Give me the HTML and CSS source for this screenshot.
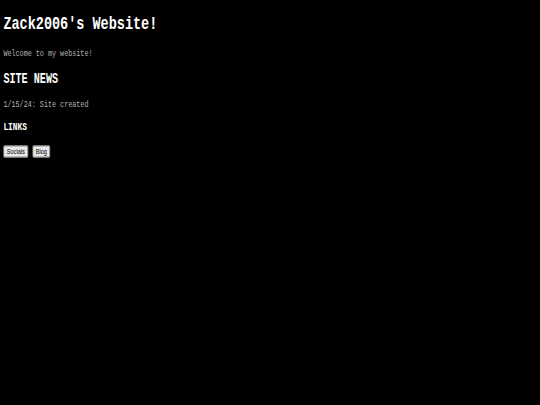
FILE: index.html
```html
<!DOCTYPE html>
<html>
<head>
<meta charset="utf-8">
<title>Zack2006's Website!</title>
<link rel="stylesheet" href="styles.css">
</head>
<body>
<div class="frame">
  <div class="viewport">
    <div class="page">
      <h1>Zack2006's Website!</h1>
      <p class="text">Welcome to my website!</p>
      <h2>SITE NEWS</h2>
      <p class="text">1/15/24: Site created</p>
      <h3>LINKS</h3>
      <p class="links"><button class="link-btn">Socials</button> <button class="link-btn">Blog</button></p>
    </div>
  </div>
</div>
</body>
</html>
```
FILE: styles.css
```css
html, body {
  margin: 0;
  padding: 0;
  background: #000;
  overflow: hidden;
}
.frame {
  width: 540px;
  height: 405px;
  overflow: hidden;
}
.viewport {
  display: flow-root;
  width: 1280px;
  height: 675px;
  transform: scale(0.421875, 0.6);
  transform-origin: 0 0;
}
.page {
  margin: 8px;
  color: #fff;
  font-family: "Liberation Mono", "Courier New", monospace;
  font-size: 16px;
}
.page h1 {
  font-size: 32px;
  margin: 21.44px 0;
}
.page h2 {
  font-size: 24px;
  margin: 19.92px 0;
}
.page h3 {
  font-size: 18.72px;
  margin: 18.72px 0;
}
.page p {
  margin: 16px 0;
}
.page .text {
  color: #b4b4b4;
}
.link-btn {
  font-family: "Liberation Sans", Arial, sans-serif;
  font-size: 13.333px;
  color: #000;
  background: #e9e9e9;
  border: 2px solid #8a8a8a;
  border-radius: 3px;
  padding: 1px 6px;
}
```
